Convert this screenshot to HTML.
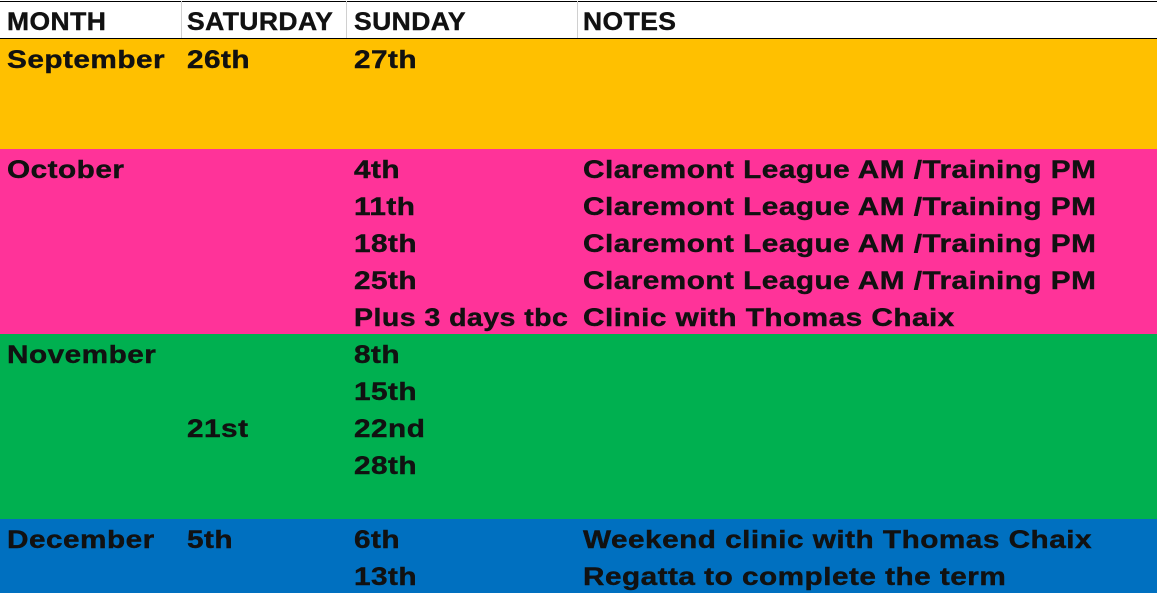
<!DOCTYPE html>
<html><head><style>
body{margin:0;width:1157px;height:593px;overflow:hidden;background:#fff;position:relative;font-family:"Liberation Sans",Arial,sans-serif;font-weight:bold;font-size:25px;color:#111;}
.b{position:absolute;left:0;width:1157px}
.t{position:absolute;line-height:37px;white-space:nowrap;letter-spacing:0.4px;transform:scaleX(1.19);transform-origin:0 50%;-webkit-text-stroke:0.4px #111}
.h{transform:scaleX(1.06);top:4px}
.v{position:absolute;top:1px;height:37px;width:1px;background:#d0d0d0}
</style></head><body>
<div class="b" style="top:1px;height:1px;background:#000"></div>
<div class="b" style="top:38px;height:1px;background:#000"></div>
<div class="v" style="left:181px"></div><div class="v" style="left:346px"></div><div class="v" style="left:577px"></div>
<div class="b" style="top:39px;height:110px;background:#FFC000"></div>
<div class="b" style="top:149px;height:185px;background:#FF3399"></div>
<div class="b" style="top:334px;height:185px;background:#00B050"></div>
<div class="b" style="top:519px;height:74px;background:#0070C0"></div>

<div class="t h" style="left:7px">MONTH</div>
<div class="t h" style="left:187px">SATURDAY</div>
<div class="t h" style="left:354px">SUNDAY</div>
<div class="t h" style="left:583px">NOTES</div>

<div class="t" style="left:7px;top:42px">September</div>
<div class="t" style="left:187px;top:42px">26th</div>
<div class="t" style="left:354px;top:42px">27th</div>

<div class="t" style="left:7px;top:152px">October</div>
<div class="t" style="left:354px;top:152px">4th</div>
<div class="t" style="left:583px;top:152px">Claremont League AM /Training PM</div>
<div class="t" style="left:354px;top:189px">11th</div>
<div class="t" style="left:583px;top:189px">Claremont League AM /Training PM</div>
<div class="t" style="left:354px;top:226px">18th</div>
<div class="t" style="left:583px;top:226px">Claremont League AM /Training PM</div>
<div class="t" style="left:354px;top:263px">25th</div>
<div class="t" style="left:583px;top:263px">Claremont League AM /Training PM</div>
<div class="t" style="left:354px;top:300px;transform:scaleX(1.14)">Plus 3 days tbc</div>
<div class="t" style="left:583px;top:300px">Clinic with Thomas Chaix</div>

<div class="t" style="left:7px;top:337px">November</div>
<div class="t" style="left:354px;top:337px">8th</div>
<div class="t" style="left:354px;top:374px">15th</div>
<div class="t" style="left:187px;top:411px">21st</div>
<div class="t" style="left:354px;top:411px">22nd</div>
<div class="t" style="left:354px;top:448px">28th</div>

<div class="t" style="left:7px;top:522px">December</div>
<div class="t" style="left:187px;top:522px">5th</div>
<div class="t" style="left:354px;top:522px">6th</div>
<div class="t" style="left:583px;top:522px">Weekend clinic with Thomas Chaix</div>
<div class="t" style="left:354px;top:559px">13th</div>
<div class="t" style="left:583px;top:559px">Regatta to complete the term</div>
</body></html>
